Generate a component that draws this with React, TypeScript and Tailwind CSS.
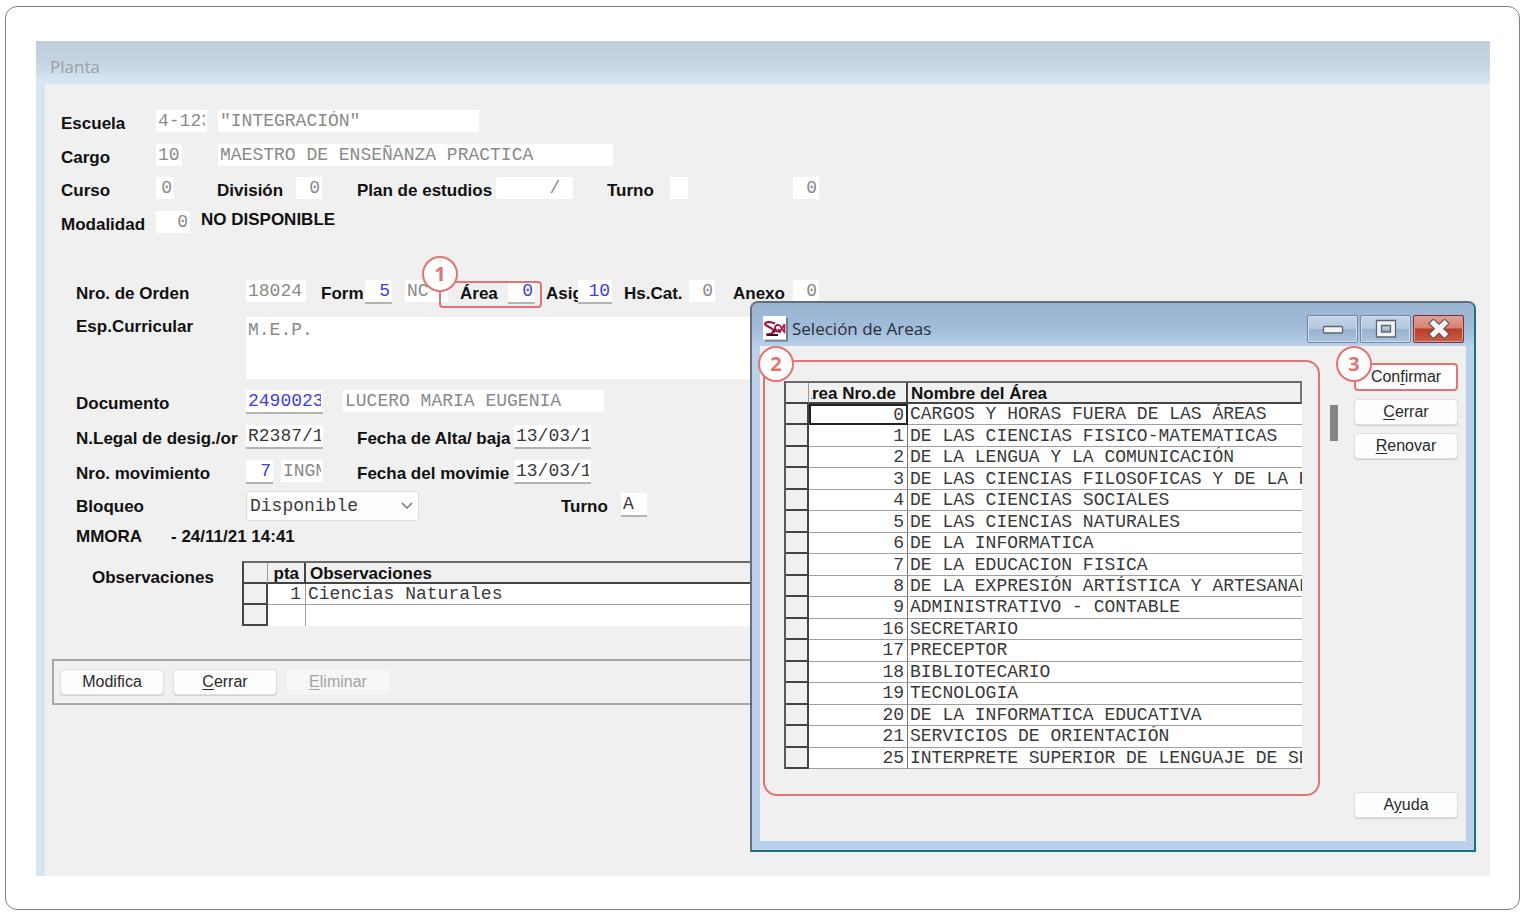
import type { ReactNode } from "react";

type Tone = "muted" | "blue" | "dark";

const toneClass: Record<Tone, string> = {
  muted: "text-[#8a8a8a]",
  blue: "border-b-2 border-[#b4b4b4] text-[#3c3cf5]",
  dark: "border-b-2 border-[#b4b4b4] text-[#3a3a3a]",
};

function Field({
  id,
  value,
  label,
  width,
  tone = "muted",
  right = false,
}: {
  id: string;
  value: string;
  label?: string;
  width: string;
  tone?: Tone;
  right?: boolean;
}) {
  return (
    <input
      id={id}
      aria-label={label}
      defaultValue={value}
      readOnly={tone === "muted"}
      className={`block bg-white px-[2px] font-['Liberation_Mono',monospace] text-[18px] leading-[20px] outline-none ${
        tone === "muted" ? "h-[22px]" : "h-[24px]"
      } ${right ? "text-right" : ""} ${width} ${toneClass[tone]}`}
    />
  );
}

function Label({ htmlFor, children }: { htmlFor: string; children: ReactNode }) {
  return (
    <label htmlFor={htmlFor} className="block overflow-hidden pt-[3px] leading-[22px] font-bold whitespace-nowrap">
      {children}
    </label>
  );
}

function Btn({ children, disabled = false }: { children: ReactNode; disabled?: boolean }) {
  return (
    <button
      type="button"
      disabled={disabled}
      className="h-[26px] w-[104px] rounded-[4px] border border-[#dedede] bg-[#fdfdfd] text-[16px] leading-[22px] text-[#2a2a2a] shadow-[0_1px_1px_#d0d0d0] disabled:border-[#f3f3f3] disabled:bg-[#f6f6f6] disabled:text-[#a3a3a3] disabled:shadow-none"
    >
      {children}
    </button>
  );
}

function Key({ children }: { children: ReactNode }) {
  return <span className="underline underline-offset-2">{children}</span>;
}

function Badge({ n, place }: { n: number; place: string }) {
  return (
    <span
      className={`absolute z-10 flex size-[36px] items-center justify-center rounded-full border-2 border-[#e57373] bg-white font-['Open_Sans',sans-serif] text-[20px] leading-[24px] font-bold text-[#e57373] ${place}`}
    >
      {n}
    </span>
  );
}

const areas: [number, string][] = [
  [0, "CARGOS Y HORAS FUERA DE LAS ÁREAS"],
  [1, "DE LAS CIENCIAS FISICO-MATEMATICAS"],
  [2, "DE LA LENGUA Y LA COMUNICACIÓN"],
  [3, "DE LAS CIENCIAS FILOSOFICAS Y DE LA E"],
  [4, "DE LAS CIENCIAS SOCIALES"],
  [5, "DE LAS CIENCIAS NATURALES"],
  [6, "DE LA INFORMATICA"],
  [7, "DE LA EDUCACION FISICA"],
  [8, "DE LA EXPRESIÓN ARTÍSTICA Y ARTESANAL"],
  [9, "ADMINISTRATIVO - CONTABLE"],
  [16, "SECRETARIO"],
  [17, "PRECEPTOR"],
  [18, "BIBLIOTECARIO"],
  [19, "TECNOLOGIA"],
  [20, "DE LA INFORMATICA EDUCATIVA"],
  [21, "SERVICIOS DE ORIENTACIÓN"],
  [25, "INTERPRETE SUPERIOR DE LENGUAJE DE SE"],
];

function AreasTable() {
  return (
    <table className="h-[388px] w-[518px] table-fixed border-separate border-spacing-0 border-t-2 border-l-2 border-t-[#6a6a6a] border-l-[#5a5a5a]">
      <colgroup>
        <col className="w-[23px]" />
        <col className="w-[99px]" />
        <col />
      </colgroup>
      <thead>
        <tr className="h-[21px] text-left leading-[18px]">
          <th className="border-r border-b-2 border-r-[#9a9a9a] border-b-[#444] p-0" aria-label="Selector" />
          <th className="border-r-2 border-b-2 border-[#444] p-0">
            <div className="ml-[2px] flex h-[19px] justify-end overflow-hidden pt-[2px] pr-[10px] whitespace-nowrap">
              Área Nro.de
            </div>
          </th>
          <th className="border-r-2 border-b-2 border-r-[#777] border-b-[#444] p-0">
            <div className="h-[19px] overflow-hidden pt-[2px] pl-[3px]">Nombre del Área</div>
          </th>
        </tr>
      </thead>
      <tbody className="font-['Liberation_Mono',monospace] text-[18px] leading-[18px] text-[#3a3a3a]">
        {areas.map(([num, name], i) => (
          <tr key={num} className="h-[21px]">
            <td className="border-r-2 border-b-2 border-[#444] bg-[#f0f0f0] p-0" />
            <td
              className={`bg-white p-0 text-right ${
                i === 0
                  ? "border-2 border-[#222] pr-[2px] leading-[16px]"
                  : "border-r border-b border-r-[#777] border-b-[#a0a0a0] pr-[3px]"
              }`}
            >
              {num}
            </td>
            <td className="overflow-hidden border-b border-[#a0a0a0] bg-white p-0 pl-[2px] whitespace-nowrap">
              {name}
            </td>
          </tr>
        ))}
      </tbody>
    </table>
  );
}

function AppIcon() {
  return (
    <svg viewBox="0 0 25 26" className="h-[26px] w-[25px]" aria-hidden="true">
      <path d="M2 24.500h22V2" fill="none" stroke="#6f7f92" strokeWidth="2" />
      <rect width="23" height="23.500" fill="#fff" />
      <path
        d="M12 7.500C8 5.500 2.500 5.500 2 8c0 2 8 3.500 8.500 6.500 0 2.500-3 4-7.500 4"
        fill="none"
        stroke="#a80f45"
        strokeWidth="2.200"
      />
      <path d="M4 19h11M10.500 16.500l2.500-4" fill="none" stroke="#3a1220" strokeWidth="2.200" />
      <path d="M16.500 9.500c-3-1.500-5 .5-4.500 3.500s3.500 3.500 5 1.500l-2.500-1" fill="none" stroke="#8e1440" strokeWidth="1.800" />
      <path d="M16.500 9l5.500 8M21.500 8l-5 9M21.500 8v9" fill="none" stroke="#b3204f" strokeWidth="1.700" />
    </svg>
  );
}

function WindowButtons() {
  const glass =
    "flex h-[28px] w-[51px] items-center justify-center rounded-[2px] border border-[#7388a3] bg-[linear-gradient(#c3d4e6_0%,#b4c9df_48%,#98b1cc_50%,#abc3de_100%)] shadow-[inset_0_0_0_1px_#d0deec]";
  return (
    <div className="flex gap-[2px]">
      <button type="button" aria-label="Minimizar" className={glass}>
        <svg viewBox="0 0 22 10" className="h-[10px] w-[22px]">
          <rect x="1.500" y="2.500" width="19" height="6.500" rx="1" fill="#f4f4f4" stroke="#5d6673" strokeWidth="1.300" />
        </svg>
      </button>
      <button type="button" aria-label="Maximizar" className={glass}>
        <svg viewBox="0 0 22 20" className="h-[20px] w-[22px]">
          <path
            d="M1.500 1.500h19v16.500h-19zM6.500 6.500v6.500h9V6.500z"
            fill="#f2f2f2"
            fillRule="evenodd"
            stroke="#5d6673"
            strokeWidth="1.300"
          />
        </svg>
      </button>
      <button
        type="button"
        aria-label="Cerrar ventana"
        className="flex h-[28px] w-[51px] items-center justify-center rounded-[2px] border border-[#7c3038] bg-[linear-gradient(#e3a197_0%,#d57f72_46%,#b93c25_50%,#c8604b_100%)] shadow-[inset_0_0_0_1px_#dd9a8f]"
      >
        <svg viewBox="0 0 22 20" className="h-[20px] w-[22px]">
          <path d="M5.500 4.500l11 10.500M16.500 4.500L5.500 15" stroke="#5d5560" strokeWidth="7.500" strokeLinecap="square" strokeLinejoin="round" />
          <path d="M5.500 4.500l11 10.500M16.500 4.500L5.500 15" stroke="#f5f5f5" strokeWidth="5.200" strokeLinecap="square" />
        </svg>
      </button>
    </div>
  );
}

function AreasDialog() {
  return (
    <div
      role="dialog"
      aria-labelledby="dlg-title"
      className="absolute top-[260px] right-[14px] w-[726px] rounded-t-[8px] border-2 border-t-[#666f78] border-r-[#1c6f7c] border-b-[#1c6f7c] border-l-[#66707c] bg-[#b9d1ea] px-[8px] pb-[9px]"
    >
      <div className="-mx-[8px] flex h-[43px] items-center rounded-t-[6px] bg-[linear-gradient(#99b4d1,#a2bcd9_60%,#b9d1ea)] pt-[8px] pr-[10px] pl-[11px]">
        <AppIcon />
        <h2
          id="dlg-title"
          className="flex-1 pl-[4px] font-['Open_Sans',sans-serif] text-[17px] leading-[24px] text-[#26303c]"
        >
          Seleción de Areas
        </h2>
        <WindowButtons />
      </div>

      <div className="flex bg-[#f0f0f0] pt-[14px] pb-[45px] pl-[3px]">
        <section className="relative rounded-[14px] border-2 border-[#e57373] pt-[19px] pr-[16px] pb-[25px] pl-[19px]">
          <AreasTable />
          <Badge n={2} place="-top-[16px] -left-[7px]" />
        </section>
        <div className="ml-[10px] pt-[45px]" aria-hidden="true">
          <div className="h-[36px] w-[8px] bg-[#848484]" />
        </div>
        <div className="-mb-[22px] ml-[16px] flex flex-col pt-[3px]">
          <div className="relative mb-[8px] h-[28px]">
            <div className="flex h-[28px] items-center rounded-[4px] bg-[#fdfdfd] outline-2 -outline-offset-2 outline-[#e57373]">
              <button type="button" className="h-[28px] w-[104px] text-[16px] leading-[22px] text-[#2a2a2a]">
                Con<Key>f</Key>irmar
              </button>
            </div>
            <Badge n={3} place="-top-[17px] -left-[18px]" />
          </div>
          <div className="flex flex-1 flex-col gap-[8px]">
            <Btn>
              <Key>C</Key>errar
            </Btn>
            <Btn>
              <Key>R</Key>enovar
            </Btn>
            <div className="mt-auto">
              <Btn>
                A<Key>y</Key>uda
              </Btn>
            </div>
          </div>
        </div>
      </div>
    </div>
  );
}

function SchoolRows() {
  return (
    <div className="pl-[16px]">
      <div className="grid h-[34px] grid-cols-[95px_62px_auto] justify-start">
        <Label htmlFor="escuela">Escuela</Label>
        <Field id="escuela" value="4-123" width="w-[51px]" />
        <Field id="escuela-nombre" label="Nombre de escuela" value={'"INTEGRACIÓN"'} width="w-[261px]" />
      </div>
      <div className="grid h-[33px] grid-cols-[95px_62px_auto] justify-start">
        <Label htmlFor="cargo">Cargo</Label>
        <Field id="cargo" value="10" width="w-[26px]" />
        <Field
          id="cargo-nombre"
          label="Nombre del cargo"
          value="MAESTRO DE ENSEÑANZA PRACTICA"
          width="w-[395px]"
        />
      </div>
      <div className="grid h-[34px] grid-cols-[95px_61px_79px_61px_139px_111px_63px_123px_auto] justify-start">
        <Label htmlFor="curso">Curso</Label>
        <Field id="curso" value="0" width="w-[18px]" right />
        <Label htmlFor="division">División</Label>
        <Field id="division" value="0" width="w-[26px]" right />
        <Label htmlFor="plan">Plan de estudios</Label>
        <Field id="plan" value="/ " width="w-[77px]" right />
        <Label htmlFor="turno-curso">Turno</Label>
        <Field id="turno-curso" value="" width="w-[18px]" />
        <Field id="turno-num" label="Número de turno" value="0" width="w-[26px]" right />
      </div>
      <div className="grid h-[34px] grid-cols-[95px_45px_auto] justify-start">
        <Label htmlFor="modalidad">Modalidad</Label>
        <Field id="modalidad" value="0" width="w-[34px]" right />
        <span className="leading-[18px] font-bold">NO DISPONIBLE</span>
      </div>
    </div>
  );
}

function PostRows() {
  return (
    <div className="pl-[31px]">
      <div className="grid h-[37px] grid-cols-[170px_75px_44px_40px_55px_86px_32px_46px_65px_44px_60px_auto] justify-start">
        <Label htmlFor="orden">Nro. de Orden</Label>
        <Field id="orden" value="18024" width="w-[60px]" />
        <Label htmlFor="form">Form</Label>
        <Field id="form" value="5" width="w-[27px]" tone="blue" right />
        <Field id="nc" label="Tipo de formación" value="NC" width="w-[43px]" />
        <div className="relative flex">
          <div className="w-[48px]">
            <Label htmlFor="area">Área</Label>
          </div>
          <Field id="area" value="0" width="w-[27px]" tone="blue" right />
          <span className="pointer-events-none absolute top-[1px] -left-[21px] h-[27px] w-[103px] rounded-[4px] border-2 border-[#e57373]" />
          <Badge n={1} place="-top-[24px] -left-[38px]" />
        </div>
        <Label htmlFor="asig">Asig</Label>
        <Field id="asig" value="10" width="w-[34px]" tone="blue" right />
        <Label htmlFor="hscat">Hs.Cat.</Label>
        <Field id="hscat" value="0" width="w-[26px]" right />
        <Label htmlFor="anexo">Anexo</Label>
        <Field id="anexo" value="0" width="w-[26px]" right />
      </div>

      <div className="mb-[11px] grid grid-cols-[170px_auto] justify-start">
        <div className="-mt-[4px]">
          <Label htmlFor="esp">Esp.Curricular</Label>
        </div>
        <textarea
          id="esp"
          defaultValue="M.E.P."
          className="block h-[62px] w-[573px] resize-none bg-white px-[2px] pt-[3px] font-['Liberation_Mono',monospace] text-[18px] leading-[20px] text-[#8a8a8a] outline-none"
        />
      </div>

      <div className="grid h-[35px] grid-cols-[170px_97px_auto] justify-start">
        <Label htmlFor="documento">Documento</Label>
        <Field id="documento" value="2490023" width="w-[77px]" tone="blue" />
        <Field id="persona" label="Persona" value="LUCERO MARIA EUGENIA" width="w-[261px]" />
      </div>
      <div className="grid h-[35px] grid-cols-[170px_111px_157px_auto] justify-start">
        <Label htmlFor="legal">N.Legal de desig./or</Label>
        <Field id="legal" value="R2387/1" width="w-[77px]" tone="dark" />
        <Label htmlFor="alta">Fecha de Alta/ baja</Label>
        <Field id="alta" value="13/03/1" width="w-[77px]" tone="dark" />
      </div>
      <div className="grid h-[33px] grid-cols-[170px_35px_76px_157px_auto] justify-start">
        <Label htmlFor="mov">Nro. movimiento</Label>
        <Field id="mov" value="7" width="w-[27px]" tone="blue" right />
        <Field id="mov-tipo" label="Tipo de movimiento" value="INGM" width="w-[42px]" />
        <Label htmlFor="mov-fecha">Fecha del movimie</Label>
        <Field id="mov-fecha" value="13/03/1" width="w-[77px]" tone="dark" />
      </div>
      <div className="grid h-[33px] grid-cols-[170px_315px_60px_auto] justify-start">
        <Label htmlFor="bloqueo">Bloqueo</Label>
        <div className="relative -mt-[2px] h-[30px] w-[173px]">
          <select
            id="bloqueo"
            className="h-[30px] w-[173px] appearance-none rounded-[3px] border border-[#dcdcdc] bg-[#fdfdfd] pl-[3px] font-['Liberation_Mono',monospace] text-[18px] leading-[24px] text-[#3a3a3a]"
          >
            <option>Disponible</option>
          </select>
          <svg viewBox="0 0 12 8" className="pointer-events-none absolute top-[11px] right-[6px] h-[8px] w-[12px]">
            <path d="M1 1l5 5 5-5" fill="none" stroke="#777" strokeWidth="1.500" />
          </svg>
        </div>
        <Label htmlFor="turno">Turno</Label>
        <Field id="turno" value="A" width="w-[26px]" tone="dark" />
      </div>
      <div className="grid h-[35px] grid-cols-[95px_auto] justify-start leading-[22px] font-bold">
        <span>MMORA</span>
        <span>- 24/11/21 14:41</span>
      </div>
    </div>
  );
}

function NotesTable() {
  return (
    <div className="flex pl-[47px]">
      <h3 className="w-[150px] pt-[6px] leading-[22px] font-bold">Observaciones</h3>
      <table className="w-[577px] table-fixed border-separate border-spacing-0 border-t-2 border-l-2 border-t-[#6a6a6a] border-l-[#444]">
        <colgroup>
          <col className="w-[24px]" />
          <col className="w-[38px]" />
          <col />
        </colgroup>
        <thead>
          <tr className="h-[21px] text-left leading-[18px]">
            <th className="border-r border-b-2 border-r-[#9a9a9a] border-b-[#444] p-0" aria-label="Selector" />
            <th className="border-r-2 border-b-2 border-[#444] p-0">
              <div className="h-[19px] overflow-hidden pt-[2px] pr-[5px] text-right">pta</div>
            </th>
            <th className="border-b-2 border-[#444] p-0">
              <div className="h-[19px] overflow-hidden pt-[2px] pl-[4px]">Observaciones</div>
            </th>
          </tr>
        </thead>
        <tbody className="font-['Liberation_Mono',monospace] text-[18px] leading-[18px] text-[#3a3a3a]">
          <tr className="h-[21px]">
            <td className="border-r-2 border-b-2 border-[#444] p-0" />
            <td className="border-r border-b border-[#a0a0a0] bg-white p-0 pr-[4px] text-right">1</td>
            <td className="border-b border-[#a0a0a0] bg-white p-0 pl-[2px]">Ciencias Naturales</td>
          </tr>
          <tr className="h-[21px]">
            <td className="border-r-2 border-b-2 border-[#444] p-0" />
            <td className="border-r border-[#a0a0a0] bg-white p-0" />
            <td className="bg-white p-0" />
          </tr>
        </tbody>
      </table>
    </div>
  );
}

export default function App() {
  return (
    <div className="flex min-h-screen bg-white pt-[6px] pr-[6px] pb-[5px] pl-[5px] font-['Liberation_Sans',sans-serif] text-[17px] text-[#111]">
      <div className="flex flex-1 rounded-[12px] border border-[#808080] pt-[34px] pr-[29px] pb-[33px] pl-[30px]">
        <main className="relative flex min-w-0 flex-1 flex-col overflow-hidden bg-[#f0f0f0]">
          <header className="h-[43px] bg-[linear-gradient(#bfccda,#c6d3e1_50%,#d7e4f2_90%)] pt-[14px] pl-[14px]">
            <h1 className="font-['Open_Sans',sans-serif] text-[17px] leading-[24px] text-[#9b9fa4]">Planta</h1>
          </header>
          <div className="flex flex-1 flex-col border-l-[9px] border-[#d7e4f2] pt-[26px]">
            <SchoolRows />
            <div className="mt-[35px]">
              <PostRows />
            </div>
            <NotesTable />
            <div className="mt-[33px] mr-[240px] ml-[7px] flex h-[46px] items-center gap-[9px] border-2 border-[#a8a8a8] pl-[6px]">
              <Btn>Modifica</Btn>
              <Btn>
                <Key>C</Key>errar
              </Btn>
              <Btn disabled>
                <Key>E</Key>liminar
              </Btn>
            </div>
          </div>
          <AreasDialog />
        </main>
      </div>
    </div>
  );
}
